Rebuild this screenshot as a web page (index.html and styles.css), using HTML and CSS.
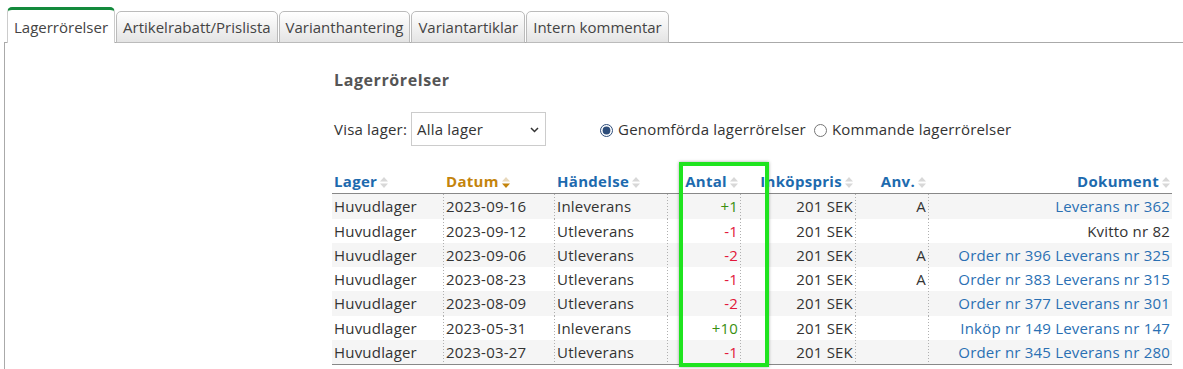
FILE: index.html
```html
<!DOCTYPE html>
<html>
<head>
  <link rel="stylesheet" href="styles.css">
</head>
<body>
  <!-- Tab bar -->
  <div class="tabs">
    <div class="tab active">Lagerrörelser</div>
    <div class="tab">Artikelrabatt/Prislista</div>
    <div class="tab">Varianthantering</div>
    <div class="tab">Variantartiklar</div>
    <div class="tab">Intern kommentar</div>
  </div>

  <div class="panel">
    <div class="content">
      <h2 class="title">Lagerrörelser</h2>

      <div class="filters">
        <span class="filter-label">Visa lager:</span>
        <div class="select">
          <span>Alla lager</span>
          <svg class="chevron" width="9" height="6" viewBox="0 0 9 6"><path d="M1 1 L4.5 4.5 L8 1" fill="none" stroke="#333" stroke-width="1.5"/></svg>
        </div>
        <label class="radio"><input type="radio" name="typ" checked> Genomförda lagerrörelser</label>
        <label class="radio"><input type="radio" name="typ"> Kommande lagerrörelser</label>
      </div>

      <div class="table-wrap">
        <table class="moves">
          <colgroup>
            <col style="width:111px">
            <col style="width:111px">
            <col style="width:113px">
            <col style="width:73px">
            <col style="width:115px">
            <col style="width:73px">
            <col style="width:244px">
          </colgroup>
          <thead>
            <tr>
              <th>Lager<svg class="sort" width="8" height="11" viewBox="0 0 8 11"><polygon points="0,4.5 4,0 8,4.5"/><polygon points="0,6.5 4,11 8,6.5"/></svg></th>
              <th class="sorted">Datum<svg class="sort" width="8" height="11" viewBox="0 0 8 11"><polygon class="off" points="0,4.5 4,0 8,4.5"/><polygon points="0,6.5 4,11 8,6.5"/></svg></th>
              <th>Händelse<svg class="sort" width="8" height="11" viewBox="0 0 8 11"><polygon points="0,4.5 4,0 8,4.5"/><polygon points="0,6.5 4,11 8,6.5"/></svg></th>
              <th class="num">Antal<svg class="sort" width="8" height="11" viewBox="0 0 8 11"><polygon points="0,4.5 4,0 8,4.5"/><polygon points="0,6.5 4,11 8,6.5"/></svg></th>
              <th class="num">Inköpspris<svg class="sort" width="8" height="11" viewBox="0 0 8 11"><polygon points="0,4.5 4,0 8,4.5"/><polygon points="0,6.5 4,11 8,6.5"/></svg></th>
              <th class="num">Anv.<svg class="sort" width="8" height="11" viewBox="0 0 8 11"><polygon points="0,4.5 4,0 8,4.5"/><polygon points="0,6.5 4,11 8,6.5"/></svg></th>
              <th class="num">Dokument<svg class="sort" width="8" height="11" viewBox="0 0 8 11"><polygon points="0,4.5 4,0 8,4.5"/><polygon points="0,6.5 4,11 8,6.5"/></svg></th>
            </tr>
          </thead>
          <tbody>
            <tr>
              <td>Huvudlager</td><td>2023-09-16</td><td>Inleverans</td>
              <td class="num plus">+1</td><td class="num">201 SEK</td><td class="num">A</td>
              <td class="num"><a href="#">Leverans nr 362</a></td>
            </tr>
            <tr>
              <td>Huvudlager</td><td>2023-09-12</td><td>Utleverans</td>
              <td class="num minus">-1</td><td class="num">201 SEK</td><td class="num"></td>
              <td class="num">Kvitto nr 82</td>
            </tr>
            <tr>
              <td>Huvudlager</td><td>2023-09-06</td><td>Utleverans</td>
              <td class="num minus">-2</td><td class="num">201 SEK</td><td class="num">A</td>
              <td class="num"><a href="#">Order nr 396</a> <a href="#">Leverans nr 325</a></td>
            </tr>
            <tr>
              <td>Huvudlager</td><td>2023-08-23</td><td>Utleverans</td>
              <td class="num minus">-1</td><td class="num">201 SEK</td><td class="num">A</td>
              <td class="num"><a href="#">Order nr 383</a> <a href="#">Leverans nr 315</a></td>
            </tr>
            <tr>
              <td>Huvudlager</td><td>2023-08-09</td><td>Utleverans</td>
              <td class="num minus">-2</td><td class="num">201 SEK</td><td class="num"></td>
              <td class="num"><a href="#">Order nr 377</a> <a href="#">Leverans nr 301</a></td>
            </tr>
            <tr>
              <td>Huvudlager</td><td>2023-05-31</td><td>Inleverans</td>
              <td class="num plus">+10</td><td class="num">201 SEK</td><td class="num"></td>
              <td class="num"><a href="#">Inköp nr 149</a> <a href="#">Leverans nr 147</a></td>
            </tr>
            <tr>
              <td>Huvudlager</td><td>2023-03-27</td><td>Utleverans</td>
              <td class="num minus">-1</td><td class="num">201 SEK</td><td class="num"></td>
              <td class="num"><a href="#">Order nr 345</a> <a href="#">Leverans nr 280</a></td>
            </tr>
          </tbody>
        </table>
        <!-- highlight around the Antal column -->
        <div class="highlight"></div>
      </div>
    </div>
  </div>
</body>
</html>
```

FILE: styles.css
```css
body {
  margin: 0;
  padding: 7px 0 0 4px;
  font-family: 'Open Sans', 'Liberation Sans', sans-serif;
  font-size: 15px;
  letter-spacing: 0.2px;
  color: #333;
  background: white;
  overflow: hidden;
}

/* Tabs */
.tabs {
  display: flex;
  align-items: flex-end;
  gap: 1px;
  padding-left: 3px;
  border-bottom: 1px solid #aaa;
}

.tab {
  font-size: 15px;
  letter-spacing: 0;
  line-height: 20px;
  color: #444;
  padding: 5px 6px;
  margin-bottom: -1px;
  border: 1px solid #bbb;
  border-radius: 5px 5px 0 0;
  background: linear-gradient(#ffffff, #e4e4e4);
  white-space: nowrap;
}

.tab.active {
  background: white;
  border-color: #ccc;
  border-top: 3px solid #138a3c;
  border-bottom: none;
  padding: 7px 6px 6px;
}

/* Panel */
.panel {
  border-left: 1px solid #aaa;
  padding: 26px 11px 20px 327px;
  min-height: 400px;
}

.title {
  margin: 0 0 0 2px;
  font-size: 16px;
  letter-spacing: 0.6px;
  line-height: 22px;
  font-weight: bold;
  color: #555;
}

.filters {
  display: flex;
  align-items: center;
  margin-top: 21px;
  height: 34px;
}

.filter-label {
  margin-left: 2px;
}

.select {
  display: flex;
  align-items: center;
  justify-content: space-between;
  width: 135px;
  height: 34px;
  box-sizing: border-box;
  margin-left: 4px;
  padding: 0 6px 0 5px;
  border: 1px solid #ccc;
  background: white;
}

.chevron {
  margin-top: 1px;
}

.radio {
  display: flex;
  align-items: center;
  gap: 5px;
}

.radio:first-of-type {
  margin-left: 54px;
}

.radio + .radio {
  margin-left: 8px;
}

.radio input {
  margin: 2px 0 0;
  width: 13px;
  height: 13px;
  accent-color: #2d4d7a;
}

/* Table */
.table-wrap {
  position: relative;
  margin-top: 23px;
  width: 840px;
}

.moves {
  width: 840px;
  table-layout: fixed;
  border-collapse: collapse;
  border-bottom: 1px solid #888;
}

.moves th,
.moves td {
  padding: 2px 2px 2px 3px;
  line-height: 20.25px;
  white-space: nowrap;
  overflow: hidden;
  text-align: left;
}

.moves th:first-child,
.moves td:first-child {
  padding-left: 2px;
}

.moves th {
  font-weight: bold;
  letter-spacing: 0.3px;
  color: #1d6aae;
  border-bottom: 1px solid #888;
}

.moves th.sorted {
  color: #c4840c;
}

.moves .num {
  text-align: right;
  padding-right: 2px;
}

/* dotted column separators */
.moves td + td {
  background-image: repeating-linear-gradient(to bottom, #b0b0b0 0 1px, transparent 1px 3px);
  background-size: 1px 100%;
  background-repeat: no-repeat;
}

.moves tbody tr:nth-child(odd) td {
  background-color: #f5f5f5;
}

.sort {
  margin-left: 3px;
  vertical-align: -1px;
  fill: #d8d8d8;
}

.sorted .sort {
  fill: #c4840c;
}

.sorted .sort .off {
  fill: #e8d8bc;
}

.moves a {
  color: #2a70b3;
  text-decoration: none;
}

.plus {
  color: #3a8f10;
}

.minus {
  color: #e2173a;
}

.highlight {
  position: absolute;
  left: 347px;
  top: -7px;
  width: 90px;
  height: 205px;
  box-sizing: border-box;
  border: 4px solid #1fe41f;
  box-shadow: 0 0 3px rgba(0, 0, 0, 0.35);
  pointer-events: none;
}
```
